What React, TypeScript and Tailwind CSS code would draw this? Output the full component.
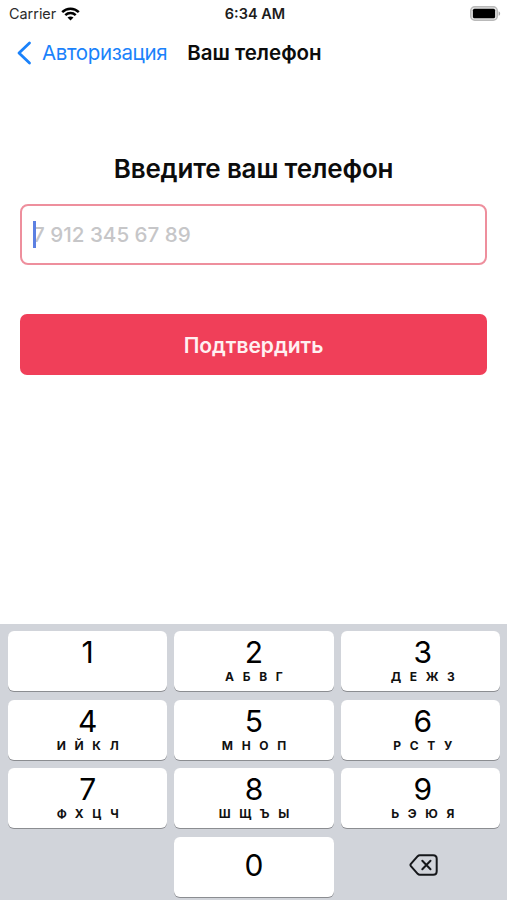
const keys = [
  { digit: "1", letters: "" },
  { digit: "2", letters: "АБВГ" },
  { digit: "3", letters: "ДЕЖЗ" },
  { digit: "4", letters: "ИЙКЛ" },
  { digit: "5", letters: "МНОП" },
  { digit: "6", letters: "РСТУ" },
  { digit: "7", letters: "ФХЦЧ" },
  { digit: "8", letters: "ШЩЪЫ" },
  { digit: "9", letters: "ЬЭЮЯ" },
];

function WifiIcon() {
  return (
    <svg className="w-[19px] h-[14px]" viewBox="0 0 19 14" fill="none" stroke="#000" strokeWidth="2.5">
      <path d="M1.2 5.2C5.8 .6 13.2 .6 17.8 5.2" />
      <path d="M4.3 8.2C7.2 5.4 11.8 5.4 14.7 8.2" />
      <path d="M9.5 13.6 6.5 10.6C8.2 9 10.8 9 12.5 10.6Z" fill="#000" stroke="none" />
    </svg>
  );
}

function BatteryIcon() {
  return (
    <svg className="w-[31px] h-[15px]" viewBox="0 0 31 15">
      <rect x=".75" y=".75" width="26.5" height="13.5" rx="4" fill="#e4e4e4" stroke="#b9b9b9" strokeWidth="1.5" />
      <rect x="2.9" y="2.7" width="22.2" height="9.6" rx="1.6" fill="#000" />
      <path d="M28.6 5.2C30.6 6 30.6 9 28.6 9.8Z" fill="#a6a6a6" />
    </svg>
  );
}

function StatusBar() {
  return (
    <div className="grid grid-cols-3 items-center h-[27px] pl-[9px] pr-[6px]">
      <div className="flex items-center gap-[5px]">
        <span className="pt-px text-[14.4px] leading-none text-[#2b2b2b]">Carrier</span>
        <WifiIcon />
      </div>
      <span className="pt-[2px] text-center text-[14.5px] leading-none font-semibold text-[#1c1c1c] whitespace-nowrap">6:34 AM</span>
      <div className="flex justify-end">
        <BatteryIcon />
      </div>
    </div>
  );
}

function NavBar() {
  return (
    <div className="flex items-center h-[51px] pl-[17px]">
      <button className="flex items-center text-[#1a82fb]">
        <svg className="w-[15px] h-6" viewBox="0 0 15 24" fill="none" stroke="currentColor" strokeWidth="2.8" strokeLinecap="round" strokeLinejoin="round">
          <path d="M12.5 2 2 12 12.5 22" />
        </svg>
        <span className="ml-[10px] pt-[2px] text-[20.5px] leading-none tracking-[-0.37px]">Авторизация</span>
      </button>
      <h1 className="ml-5 pt-[2px] text-[20.5px] leading-none font-semibold text-[#0c0c0c]">Ваш телефон</h1>
    </div>
  );
}

function Keypad() {
  return (
    <div className="h-[276px] bg-[#d1d4da] pl-2 pr-[7px] pt-[7px]">
      <div className="grid grid-cols-3 gap-x-[7px] gap-y-[8.6px]">
        {keys.map((key) => (
          <button
            key={key.digit}
            className="flex flex-col items-center h-[60px] pt-[6px] rounded-[6px] bg-white shadow-[0_1px_0_#8b8d91] nth-[3n]:pl-[5px]"
          >
            <span className="text-[30px] leading-[31px] text-black">{key.digit}</span>
            <span className="mt-[2px] mr-[-8.7px] text-[12px] leading-[14px] font-bold tracking-[8.7px] text-[#111]">{key.letters}</span>
          </button>
        ))}
        <span />
        <button className="flex items-center justify-center h-[60px] pb-[4px] rounded-[6px] bg-white text-[30px] leading-none text-black shadow-[0_1px_0_#8b8d91]">
          0
        </button>
        <button className="flex items-center justify-center h-[60px] pb-[3px] pl-[6px]">
          <svg className="w-[29px] h-[22px]" viewBox="0 0 29 22" fill="none" stroke="#15171a" strokeWidth="2" strokeLinecap="round" strokeLinejoin="round">
            <path d="M10.8 1.3H24.2Q27.7 1.3 27.7 4.8V17.2Q27.7 20.7 24.2 20.7H10.8Q9.6 20.7 8.7 19.8L1.9 12.1Q1 11 1.9 9.9L8.7 2.2Q9.6 1.3 10.8 1.3Z" />
            <path d="M13.3 6.8 21.5 15.2M21.5 6.8 13.3 15.2" />
          </svg>
        </button>
      </div>
    </div>
  );
}

export default function App() {
  return (
    <div className="flex flex-col w-[507px] h-[900px] bg-white overflow-hidden font-['Inter',sans-serif]">
      <StatusBar />
      <NavBar />

      <main className="flex-1 px-5 pt-[74px]">
        <h2 className="text-center text-[26px] leading-[34px] font-semibold tracking-[-0.17px] text-[#0c0c0c]">Введите ваш телефон</h2>

        <div className="relative flex items-center mt-[18px] h-[61px] pl-[11px] rounded-[8px] border-2 border-[#ee8f9d]">
          <span className="pt-[2px] text-[20.6px] leading-none font-medium text-[#c6c6c8]">7 912 345 67 89</span>
          <span className="absolute left-[11px] top-[15px] w-[3px] h-[27px] bg-[#5c80e2]" />
        </div>

        <button className="flex items-center justify-center mt-[49px] pt-px w-full h-[61px] rounded-[7px] bg-[#f03f59] text-[21px] leading-none font-semibold text-[#fff0f1]">
          Подтвердить
        </button>
      </main>

      <Keypad />
    </div>
  );
}
